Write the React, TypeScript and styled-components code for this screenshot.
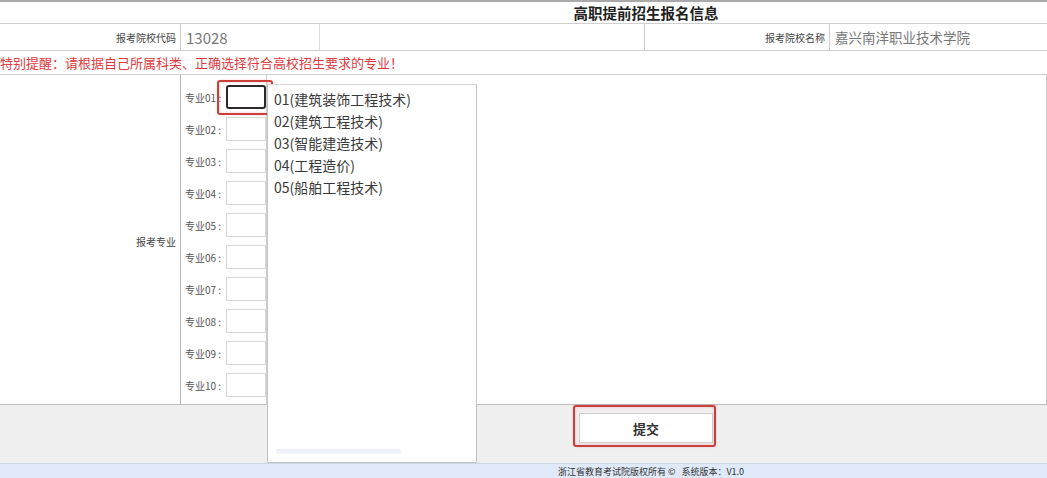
import React from 'react';
import styled, { createGlobalStyle } from 'styled-components';

const GlobalStyle = createGlobalStyle`
  * {
    margin: 0;
    padding: 0;
    box-sizing: border-box;
  }

  body {
    font-family: 'Noto Sans CJK SC', 'Noto Sans', sans-serif;
    background: #ffffff;
    color: #333;
  }
`;

const majors = ['01', '02', '03', '04', '05', '06', '07', '08', '09', '10'];

const options = [
  '01(建筑装饰工程技术)',
  '02(建筑工程技术)',
  '03(智能建造技术)',
  '04(工程造价)',
  '05(船舶工程技术)',
];

const App: React.FC = () => {
  return (
    <>
      <GlobalStyle />
      <Page>
        <TitleRow>
          <Title>高职提前招生报名信息</Title>
        </TitleRow>

        <InfoRow>
          <Label>报考院校代码</Label>
          <Value>13028</Value>
          <Blank />
          <Label>报考院校名称</Label>
          <Value $wide>嘉兴南洋职业技术学院</Value>
        </InfoRow>

        <NoticeRow>特别提醒：请根据自己所属科类、正确选择符合高校招生要求的专业！</NoticeRow>

        <MajorBlock>
          <MajorLabel>报考专业</MajorLabel>
          <MajorList>
            {majors.map((m, i) => (
              <MajorRow key={m}>
                <MajorName>专业{m} :</MajorName>
                <MajorInput $active={i === 0} />
              </MajorRow>
            ))}
          </MajorList>
          <Blank />
          <Highlight $left={217} $top={5} $width={56} $height={35} />
        </MajorBlock>

        <SubmitBar>
          <SubmitButton>提交</SubmitButton>
          <Highlight $left={573} $top={0} $width={143} $height={42} />
        </SubmitBar>

        <Footer>浙江省教育考试院版权所有 ©&nbsp;&nbsp;&nbsp;系统版本：V1.0</Footer>

        <Dropdown>
          {options.map((o) => (
            <Option key={o}>{o}</Option>
          ))}
          <DropdownSmudge />
        </Dropdown>
      </Page>
    </>
  );
};

const Page = styled.div`
  position: relative;
  width: 1047px;
  height: 478px;
  overflow: hidden;
  display: flex;
  flex-direction: column;
`;

const TitleRow = styled.div`
  height: 24px;
  border-top: 2px solid #a9a9a9;
  border-bottom: 1px solid #cfcfcf;
  display: flex;
  justify-content: center;
  align-items: center;
  padding-left: 245px;
`;

const Title = styled.h1`
  font-size: 14.5px;
  font-weight: 700;
  color: #222;
`;

const InfoRow = styled.div`
  height: 27px;
  display: grid;
  grid-template-columns: 181px 139px 325px 185px 1fr;
  border-bottom: 1px solid #cfcfcf;
`;

const Label = styled.div`
  display: flex;
  align-items: center;
  justify-content: flex-end;
  padding-right: 4px;
  font-size: 10px;
  color: #444;
  border-right: 1px solid #cfcfcf;
`;

const Value = styled.div<{ $wide?: boolean }>`
  display: flex;
  align-items: center;
  padding-left: 5px;
  font-size: ${({ $wide }) => ($wide ? '13.5px' : '15px')};
  color: #777;
  border-right: ${({ $wide }) => ($wide ? 'none' : '1px solid #dcdcdc')};
`;

const Blank = styled.div`
  border-right: 1px solid #cfcfcf;

  &:last-of-type {
    border-right: none;
  }
`;

const NoticeRow = styled.div`
  height: 24px;
  display: flex;
  align-items: center;
  font-size: 13px;
  color: #e0393e;
  border-bottom: 1px solid #cfcfcf;
`;

const MajorBlock = styled.div`
  position: relative;
  height: 330px;
  display: grid;
  grid-template-columns: 181px 86px 1fr;
  border-bottom: 1px solid #bdbdbd;
`;

const MajorLabel = styled.div`
  display: flex;
  align-items: center;
  justify-content: flex-end;
  padding-right: 4px;
  padding-top: 4px;
  font-size: 10px;
  color: #444;
  border-right: 1px solid #b5b5b5;
`;

const MajorList = styled.div`
  display: flex;
  flex-direction: column;
  padding-top: 6px;
  border-right: 1px solid #cfcfcf;
`;

const MajorRow = styled.div`
  height: 32px;
  display: flex;
  align-items: center;
  padding-left: 4px;
`;

const MajorName = styled.span`
  width: 42px;
  font-size: 10px;
  color: #555;
  white-space: nowrap;
`;

const MajorInput = styled.div<{ $active?: boolean }>`
  width: 40px;
  height: 24px;
  border: ${({ $active }) => ($active ? '2px solid #2a2a2a' : '1px solid #dadada')};
  border-radius: ${({ $active }) => ($active ? '3px' : '0')};
  background: #fff;
`;

const Highlight = styled.div<{ $left: number; $top: number; $width: number; $height: number }>`
  position: absolute;
  left: ${({ $left }) => $left}px;
  top: ${({ $top }) => $top}px;
  width: ${({ $width }) => $width}px;
  height: ${({ $height }) => $height}px;
  border: 2px solid #c9403d;
  border-radius: 3px;
  box-shadow: inset 0 0 3px rgba(220, 80, 80, 0.35), 0 0 2px rgba(220, 80, 80, 0.3);
  pointer-events: none;
`;

const SubmitBar = styled.div`
  position: relative;
  height: 58px;
  background: #efefef;
  display: flex;
  justify-content: center;
  align-items: flex-start;
  padding-top: 8px;
  padding-left: 245px;
`;

const SubmitButton = styled.button`
  width: 134px;
  height: 30px;
  background: #fff;
  border: 1px solid #cfcfcf;
  font-family: 'Noto Sans CJK SC', sans-serif;
  font-size: 13px;
  font-weight: 700;
  color: #333;
`;

const Footer = styled.div`
  height: 15px;
  background: #dfe9f8;
  border-top: 1px solid #cdd6e2;
  display: flex;
  justify-content: center;
  align-items: center;
  padding-left: 255px;
  font-size: 9px;
  color: #333;
  white-space: nowrap;
`;

const Dropdown = styled.div`
  position: absolute;
  left: 267px;
  top: 84px;
  width: 210px;
  height: 379px;
  background: #fff;
  border: 1px solid #c4c4c4;
  border-top-color: #d8d8d8;
  padding-top: 3px;
`;

const Option = styled.div`
  height: 22px;
  line-height: 22px;
  padding-left: 6px;
  font-size: 14px;
  color: #3a3a3a;
  white-space: nowrap;
`;

const DropdownSmudge = styled.div`
  position: absolute;
  left: 8px;
  bottom: 8px;
  width: 125px;
  height: 5px;
  background: linear-gradient(180deg, rgba(200, 208, 228, 0.35), rgba(220, 226, 242, 0.35));
  border-radius: 2px;
`;

export default App;
